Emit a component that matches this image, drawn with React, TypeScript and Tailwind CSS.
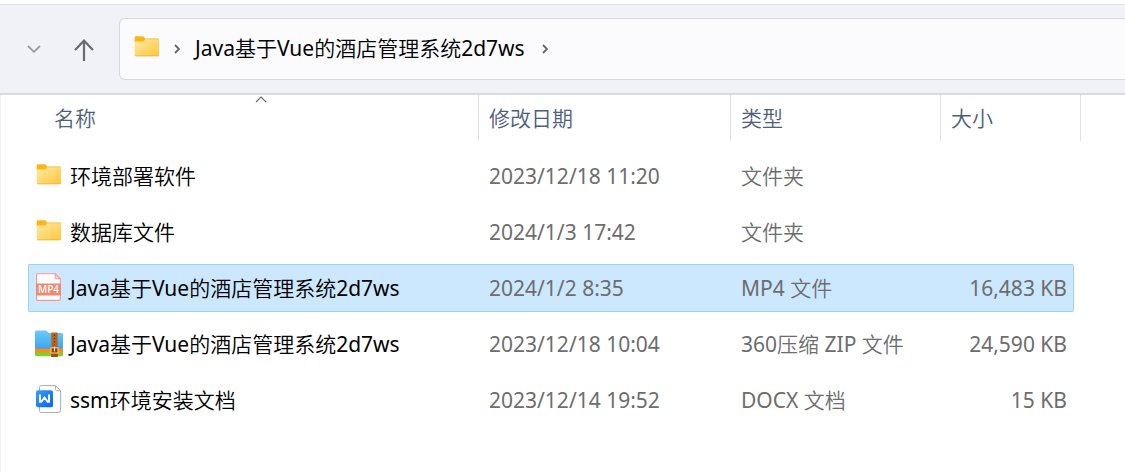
import React from "react";
import clsx from "clsx";

type FileKind = "folder" | "mp4" | "zip" | "docx";

type FileItem = {
  name: string;
  kind: FileKind;
  date: string;
  type: string;
  size: string;
  selected?: boolean;
};

const files: FileItem[] = [
  { name: "环境部署软件", kind: "folder", date: "2023/12/18 11:20", type: "文件夹", size: "" },
  { name: "数据库文件", kind: "folder", date: "2024/1/3 17:42", type: "文件夹", size: "" },
  {
    name: "Java基于Vue的酒店管理系统2d7ws",
    kind: "mp4",
    date: "2024/1/2 8:35",
    type: "MP4 文件",
    size: "16,483 KB",
    selected: true,
  },
  {
    name: "Java基于Vue的酒店管理系统2d7ws",
    kind: "zip",
    date: "2023/12/18 10:04",
    type: "360压缩 ZIP 文件",
    size: "24,590 KB",
  },
  { name: "ssm环境安装文档", kind: "docx", date: "2023/12/14 19:52", type: "DOCX 文档", size: "15 KB" },
];

function FolderIcon() {
  return (
    <svg width="28" height="30" viewBox="0 0 28 30" className="shrink-0" aria-hidden="true">
      <defs>
        <linearGradient id="folder" x1="0" y1="0" x2="1" y2="1">
          <stop offset="0" stopColor="#ffe9a6" />
          <stop offset="1" stopColor="#ffc83a" />
        </linearGradient>
      </defs>
      <path d="M1.7 4.2a1 1 0 0 1 1-1h6.6c.8 0 1.3.3 1.8.9l1 1.3h13c.5 0 .9.4.9.9v4H1.7z" fill="#fcb614" />
      <path d="M1.7 8.6h7.6c.8 0 1.3-.3 1.8-.9l1-1.5H26v15.6c0 .6-.5 1.1-1.1 1.1H2.8c-.6 0-1.1-.5-1.1-1.1z" fill="url(#folder)" />
      <path d="M2 22.3c.2.4.5.6.9.6h22c.5 0 .8-.2 1-.6" fill="none" stroke="#e8b13a" strokeWidth="0.8" />
    </svg>
  );
}

function Mp4Icon() {
  return (
    <svg width="28" height="30" viewBox="0 0 28 30" className="shrink-0" aria-hidden="true">
      <path d="M2.8.7h17.4l5.1 5.1v20.4a1.2 1.2 0 0 1-1.2 1.2H2.8a1.2 1.2 0 0 1-1.2-1.2V1.9A1.2 1.2 0 0 1 2.8.7z" fill="#fff" stroke="#f4998a" strokeWidth="1.1" />
      <path d="M20.2.7v4c0 .6.5 1.1 1.1 1.1h4z" fill="#fbd5cd" stroke="#f4998a" strokeWidth="1" />
      <rect x="1" y="10.5" width="25" height="12" fill="#f28870" />
      <text x="13.5" y="20" textAnchor="middle" fontSize="10" fontWeight="600" fill="#fff" fontFamily="Open Sans, sans-serif">
        MP4
      </text>
    </svg>
  );
}

function ZipIcon() {
  return (
    <svg width="28" height="30" viewBox="0 0 28 30" className="shrink-0" aria-hidden="true">
      <defs>
        <linearGradient id="zip" x1="0" y1="0" x2="0" y2="1">
          <stop offset="0" stopColor="#6bcbfa" />
          <stop offset="1" stopColor="#3ba5ee" />
        </linearGradient>
      </defs>
      <path d="M0 21h28v4.6c0 .9-.7 1.6-1.6 1.6H1.6C.7 27.2 0 26.5 0 25.6z" fill="#80cf2b" />
      <path d="M0 17h28v4.9c0 .9-.7 1.6-1.6 1.6H1.6C.7 23.5 0 22.8 0 21.9z" fill="#ff8c12" />
      <path d="M0 3.2C0 2.2.8 1.4 1.8 1.4H10c.7 0 1.2.2 1.7.7l2 2h12.5c1 0 1.8.8 1.8 1.8v12c0 1-.8 1.8-1.8 1.8H1.8C.8 19.700 0 18.9 0 17.9z" fill="url(#zip)" />
      <path d="M16.3 3.5h6.4V28h-6.4z" fill="#b8641c" />
      <path d="M19.5 5.5v11" stroke="#6d3509" strokeWidth="1.2" strokeDasharray="1.5 1.8" />
      <path d="M16.3 18.5h6.4V28h-6.4z" fill="#a44e0e" />
      <rect x="16" y="18.8" width="7" height="5.2" fill="#8b430d" stroke="#ffd48a" strokeWidth="1" />
      <path d="M19.5 17.5v5" stroke="#ffe0a6" strokeWidth="1.2" />
    </svg>
  );
}

function DocxIcon() {
  return (
    <svg width="28" height="30" viewBox="0 0 28 30" className="shrink-0" aria-hidden="true">
      <defs>
        <linearGradient id="docx" x1="0" y1="0" x2="1" y2="1">
          <stop offset="0" stopColor="#2fa0ff" />
          <stop offset="1" stopColor="#0c62f7" />
        </linearGradient>
      </defs>
      <path d="M6.2.6h14.3l5.1 5.2v20a1.700 1.700 0 0 1-1.7 1.7H6.200a1.700 1.700 0 0 1-1.7-1.7V2.3A1.700 1.700 0 0 1 6.200.6z" fill="#fff" stroke="#a6adbd" strokeWidth="1" />
      <path d="M20.5.6v3.7c0 .8.6 1.5 1.5 1.5h3.6z" fill="#fff" stroke="#a6adbd" strokeWidth="1" />
      <rect x="1" y="5.3" width="17" height="17" rx="2" fill="url(#docx)" />
      <path d="M5 9.5v7.4h1.3l3.2-4.4 3.2 4.4H14V9.5" fill="none" stroke="#fff" strokeWidth="1.9" />
    </svg>
  );
}

function FileIcon({ kind }: { kind: FileKind }) {
  if (kind === "mp4") return <Mp4Icon />;
  if (kind === "zip") return <ZipIcon />;
  if (kind === "docx") return <DocxIcon />;
  return <FolderIcon />;
}

function Crumb() {
  return (
    <svg width="8" height="12" viewBox="0 0 8 12" className="shrink-0" fill="none" aria-hidden="true">
      <path d="M2 3l4 4-4 4" stroke="#666" strokeWidth="1.8" />
    </svg>
  );
}

function Toolbar() {
  return (
    <header className="mt-1 flex h-[91px] shrink-0 items-center border-t border-b-2 border-t-[#e5e5e7] border-b-[#dadbe0] bg-[#f1f2f8]">
      <button type="button" aria-label="最近浏览的位置" className="ml-6 flex h-8 w-5 items-center justify-center">
        <svg width="14" height="8" viewBox="0 0 14 8" fill="none">
          <path d="M1 1l6 5.8L13 1" stroke="#9c9ca0" strokeWidth="1.8" />
        </svg>
      </button>
      <button type="button" aria-label="向上" className="ml-7 flex h-8 w-6 items-center justify-center">
        <svg width="22" height="24" viewBox="0 0 22 24" fill="none">
          <path d="M11 24V4M2 13l9-9.3L20 13" stroke="#6b6b6d" strokeWidth="2.2" />
        </svg>
      </button>
      <nav
        aria-label="地址"
        className="ml-[23px] flex h-[62px] flex-1 items-center rounded-l-md border border-r-0 border-[#d7d8de] bg-[#fbfbfd] pb-0.5 pl-[13px]"
      >
        <FolderIcon />
        <span className="ml-3 flex items-center">
          <Crumb />
        </span>
        <a href="#" className="ml-3.5 mr-4 whitespace-nowrap text-black">
          Java基于Vue的酒店管理系统2d7ws
        </a>
        <Crumb />
      </nav>
    </header>
  );
}

function HeaderCell({ children, className }: { children?: React.ReactNode; className?: string }) {
  return (
    <th scope="col" className="p-0 pb-[7px] text-left font-[350] text-[#4c607a]">
      <div className={clsx("relative flex h-[46px] items-center border-r border-[#e2e2e2]", className)}>
        {children}
      </div>
    </th>
  );
}

function Row({ file }: { file: FileItem }) {
  const cell = clsx(
    "flex h-12 items-center whitespace-nowrap border-y",
    file.selected ? "border-[#99d1ff] bg-[#cce8ff]" : "border-transparent"
  );
  return (
    <tr aria-selected={!!file.selected}>
      <td className="p-0 py-1">
        <div className={clsx(cell, "gap-[7px] rounded-l-xs border-l pl-1.5 text-black")}>
          <FileIcon kind={file.kind} />
          {file.name}
        </div>
      </td>
      <td className="p-0 py-1">
        <div className={clsx(cell, "pl-2.5")}>{file.date}</div>
      </td>
      <td className="p-0 py-1">
        <div className={clsx(cell, "pl-2.5")}>{file.type}</div>
      </td>
      <td className="p-0 py-1 pr-[7px]">
        <div className={clsx(cell, "justify-end rounded-r-xs border-r pr-1.5")}>{file.size}</div>
      </td>
    </tr>
  );
}

export default function App() {
  return (
    <div className="flex min-h-screen flex-col bg-white font-['Noto_Sans','Noto_Sans_CJK_SC_DemiLight','Noto_Sans_CJK_SC',sans-serif] text-[21px] leading-7 text-[#6d6d6d]">
      <Toolbar />
      <main className="flex-1 border-l border-[#f0f0f0] pl-[27px] pr-11">
        <table className="w-full table-fixed border-separate border-spacing-0">
          <colgroup>
            <col />
            <col className="w-[252px]" />
            <col className="w-[210px]" />
            <col className="w-[140px]" />
          </colgroup>
          <thead>
            <tr>
              <HeaderCell className="pl-[26px]">
                <svg
                  width="12"
                  height="8"
                  viewBox="0 0 12 8"
                  fill="none"
                  className="absolute left-[227px] top-0"
                  aria-hidden="true"
                >
                  <path d="M1 7l5-5 5 5" stroke="#6a6a6a" strokeWidth="1.1" />
                </svg>
                名称
              </HeaderCell>
              <HeaderCell className="pl-2.5">修改日期</HeaderCell>
              <HeaderCell className="pl-2.5">类型</HeaderCell>
              <HeaderCell className="pl-2.5">大小</HeaderCell>
            </tr>
          </thead>
          <tbody>
            {files.map((file, i) => (
              <Row key={i} file={file} />
            ))}
          </tbody>
        </table>
      </main>
    </div>
  );
}
